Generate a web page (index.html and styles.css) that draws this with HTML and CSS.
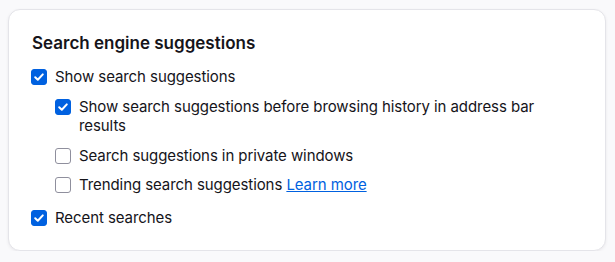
FILE: index.html
```html
<!DOCTYPE html>
<html lang="en">
	<head>
		<meta charset="UTF-8" />
		<meta name="viewport" content="width=device-width, initial-scale=1.0" />
		<title>Search engine suggestions</title>
		<link rel="stylesheet" href="styles.css">
	</head>
	<body>
		<div class="card">
			<h2 class="card-title">Search engine suggestions</h2>
			<label class="option">
				<span class="box checked">
					<svg viewBox="0 0 16 16" width="16" height="16"><path d="M4.2 8.3l2.6 2.5 5-5.4" /></svg>
				</span>
				<span class="option-text">Show search suggestions</span>
			</label>
			<div class="nested">
				<label class="option">
					<span class="box checked">
						<svg viewBox="0 0 16 16" width="16" height="16"><path d="M4.2 8.3l2.6 2.5 5-5.4" /></svg>
					</span>
					<span class="option-text">Show search suggestions before browsing history in address bar results</span>
				</label>
				<label class="option">
					<span class="box"></span>
					<span class="option-text">Search suggestions in private windows</span>
				</label>
				<label class="option">
					<span class="box"></span>
					<span class="option-text">Trending search suggestions <a href="#" class="link">Learn more</a></span>
				</label>
			</div>
			<label class="option last">
				<span class="box checked">
					<svg viewBox="0 0 16 16" width="16" height="16"><path d="M4.2 8.3l2.6 2.5 5-5.4" /></svg>
				</span>
				<span class="option-text">Recent searches</span>
			</label>
		</div>
	</body>
</html>
```

FILE: styles.css
```css
body {
	margin: 0;
	padding: 9px 9px 0 8px;
	background: #f9f9fb;
	color: #15141a;
	font-family: Inter, "Noto Sans", sans-serif;
	font-size: 15px;
}
.card {
	background: #fff;
	border: 1px solid #e4e4e9;
	border-radius: 12px;
	box-shadow: 0 1px 3px rgba(58, 57, 68, 0.08);
	padding: 21px 23px 24px 22px;
	height: 195px;
}
.card-title {
	font-size: 17px;
	font-weight: 600;
	line-height: 24px;
	margin: 0 0 12px 1px;
}
.option {
	display: flex;
	align-items: flex-start;
	gap: 8px;
	line-height: 19.5px;
	margin-bottom: 10px;
	letter-spacing: -0.08px;
}
.nested {
	padding-left: 24px;
}
.nested .option:last-child {
	margin-bottom: 13.5px;
}
.option.last {
	margin-bottom: 0;
}
.box {
	flex: none;
	width: 16px;
	height: 16px;
	margin-top: 2px;
	box-sizing: border-box;
	border: 1px solid #8f8f9d;
	border-radius: 3px;
	background: #fff;
	display: flex;
}
.box.checked {
	background: #0061e0;
	border-color: #0061e0;
}
.box svg {
	margin: -1px;
	fill: none;
	stroke: #fff;
	stroke-width: 2;
	stroke-linecap: round;
	stroke-linejoin: round;
}
.link {
	color: #0061e0;
	text-decoration: underline;
}
```
